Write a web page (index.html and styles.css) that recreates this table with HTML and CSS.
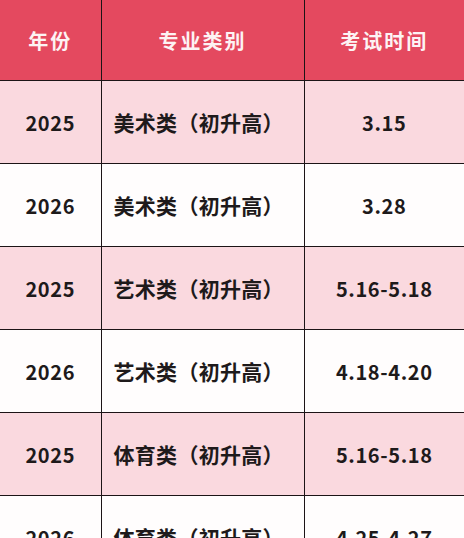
FILE: index.html
```html
<!DOCTYPE html>
<html lang="zh">
<head>
<meta charset="utf-8">
<link rel="stylesheet" href="styles.css">
</head>
<body>
<table class="exam">
  <colgroup>
    <col class="c-year">
    <col class="c-cat">
    <col class="c-time">
  </colgroup>
  <thead>
    <tr class="head">
      <th>年份</th>
      <th>专业类别</th>
      <th>考试时间</th>
    </tr>
  </thead>
  <tbody>
    <tr class="pink"><td class="num">2025</td><td class="cat">美术类（初升高）</td><td class="num">3.15</td></tr>
    <tr class="white"><td class="num">2026</td><td class="cat">美术类（初升高）</td><td class="num">3.28</td></tr>
    <tr class="pink"><td class="num">2025</td><td class="cat">艺术类（初升高）</td><td class="num">5.16-5.18</td></tr>
    <tr class="white"><td class="num">2026</td><td class="cat">艺术类（初升高）</td><td class="num">4.18-4.20</td></tr>
    <tr class="pink"><td class="num">2025</td><td class="cat">体育类（初升高）</td><td class="num">5.16-5.18</td></tr>
    <tr class="white"><td class="num">2026</td><td class="cat">体育类（初升高）</td><td class="num">4.25-4.27</td></tr>
  </tbody>
</table>
</body>
</html>
```
FILE: styles.css
```css
html, body {
  margin: 0;
  padding: 0;
  background: #fffdfd;
}
body {
  width: 464px;
  height: 538px;
  overflow: hidden;
  font-family: "Noto Sans CJK SC", "Noto Sans", sans-serif;
}
.exam {
  width: 464px;
  border-collapse: collapse;
  table-layout: fixed;
}
.c-year { width: 101px; }
.c-cat { width: 203px; }
.c-time { width: 160px; }

.exam th,
.exam td {
  border-right: 1.5px solid #1c1416;
  border-bottom: 1.5px solid #1c1416;
  padding: 0;
  text-align: center;
  vertical-align: middle;
}
.exam th:last-child,
.exam td:last-child {
  border-right: none;
}
.head th {
  height: 79px;
  background: #e4495f;
  color: #fdf3f4;
  font-size: 20px;
  font-weight: 700;
  letter-spacing: 2px;
  padding-top: 1px;
}
.exam td {
  height: 82px;
  color: #1e1a1b;
  font-size: 21px;
  font-weight: 700;
}
.pink td { background: #fad9df; }
.white td { background: #fffdfd; }
.exam td.cat {
  text-align: left;
  padding-left: 12px;
  letter-spacing: 0.3px;
}
.exam td.num {
  font-size: 20px;
  letter-spacing: 0.6px;
}
```
